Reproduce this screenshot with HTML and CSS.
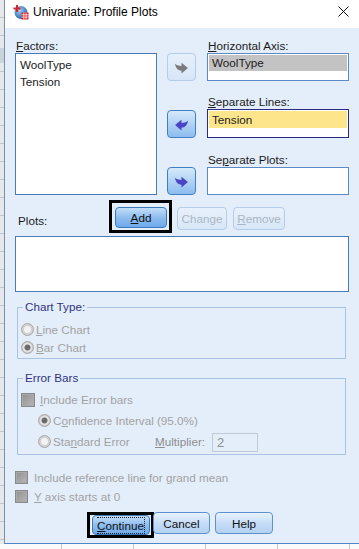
FILE: index.html
```html
<!DOCTYPE html>
<html lang="en">
<head>
    <meta charset="UTF-8">
    <title>Univariate: Profile Plots</title>
    <link rel="stylesheet" href="styles.css">
</head>
<body>
    <div class="screen">
        <div class="backdrop-left"></div>
        <div class="window">
            <!-- title bar -->
            <div class="titlebar">
                <svg class="app-icon" width="16" height="16" viewBox="0 0 16 16">
                    <defs>
                        <radialGradient id="globe" cx="0.4" cy="0.35" r="0.7">
                            <stop offset="0" stop-color="#9fd0f5"/>
                            <stop offset="1" stop-color="#1d5fa8"/>
                        </radialGradient>
                    </defs>
                    <circle cx="8" cy="8.5" r="6.5" fill="url(#globe)"/>
                    <path d="M3 1 h2 v2.5 h2.5 v2 h-2.5 v2.5 h-2 v-2.5 h-2.5 v-2 h2.5 z" fill="#d8232a"/>
                    <rect x="8.5" y="8.5" width="7" height="7" fill="#d8232a"/>
                    <path d="M8.5 10.8 h7 M8.5 13.1 h7 M10.8 8.5 v7 M13.1 8.5 v7" stroke="#fff" stroke-width="0.7"/>
                </svg>
                <span class="title">Univariate: Profile Plots</span>
                <svg class="close" width="11" height="11" viewBox="0 0 11 11">
                    <path d="M0.5 0.5 L10.5 10.5 M10.5 0.5 L0.5 10.5" stroke="#111" stroke-width="1"/>
                </svg>
            </div>

            <div class="dialog">
                <!-- variable selection -->
                <div class="top-grid">
                    <div class="label label-factors"><u>F</u>actors:</div>
                    <div class="listbox factors">
                        <div class="item">WoolType</div>
                        <div class="item">Tension</div>
                    </div>

                    <div class="label label-r1"><u>H</u>orizontal Axis:</div>
                    <button class="arrow-btn arrow-r1 disabled">
                        <svg width="15" height="13" viewBox="0 0 14 12"><path d="M7 1.5 L13 6.5 L7 11.5 L7 9 C4 9 1.5 7 1 2.5 C3 4.5 5 4.5 7 4.5 Z" fill="#7a7a7a"/></svg>
                    </button>
                    <div class="field field-r1">
                        <div class="sel sel-gray">WoolType</div>
                    </div>

                    <div class="label label-r2"><u>S</u>eparate Lines:</div>
                    <button class="arrow-btn arrow-r2">
                        <svg width="15" height="13" viewBox="0 0 14 12"><path d="M7 1.5 L1 6.5 L7 11.5 L7 9 C10 9 12.5 7 13 2.5 C11 4.5 9 4.5 7 4.5 Z" fill="#4b44c4"/></svg>
                    </button>
                    <div class="field field-r2 focused">
                        <div class="sel sel-yellow">Tension</div>
                    </div>

                    <div class="label label-r3">Se<u>p</u>arate Plots:</div>
                    <button class="arrow-btn arrow-r3">
                        <svg width="15" height="13" viewBox="0 0 14 12"><path d="M7 1.5 L13 6.5 L7 11.5 L7 9 C4 9 1.5 7 1 2.5 C3 4.5 5 4.5 7 4.5 Z" fill="#4b44c4"/></svg>
                    </button>
                    <div class="field field-r3"></div>
                </div>

                <!-- plots -->
                <div class="plots-row">
                    <span class="plots-label">Plots:</span>
                    <span class="focus-box">
                        <button class="btn btn-default add"><u>A</u>dd</button>
                    </span>
                    <button class="btn disabled change">Chan<u>g</u>e</button>
                    <button class="btn disabled remove"><u>R</u>emove</button>
                </div>
                <div class="listbox plots-list"></div>

                <!-- chart type -->
                <fieldset class="group chart-type">
                    <legend>Chart Type:</legend>
                    <div class="opt"><span class="radio"></span><span class="dim"><u>L</u>ine Chart</span></div>
                    <div class="opt"><span class="radio checked"></span><span class="dim"><u>B</u>ar Chart</span></div>
                </fieldset>

                <!-- error bars -->
                <fieldset class="group error-bars">
                    <legend>Error Bars</legend>
                    <div class="opt eb-row"><span class="check"></span><span class="dim"><u>I</u>nclude Error bars</span></div>
                    <div class="opt eb-row sub"><span class="radio checked"></span><span class="dim">C<u>o</u>nfidence Interval (95.0%)</span></div>
                    <div class="opt eb-row sub">
                        <span class="radio"></span><span class="dim se">Sta<u>n</u>dard Error</span>
                        <span class="mult-label"><u>M</u>ultiplier:</span>
                        <span class="mult-box">2</span>
                    </div>
                </fieldset>

                <div class="opt check-row"><span class="check"></span><span class="dim">Include reference line for <u>g</u>rand mean</span></div>
                <div class="opt check-row"><span class="check"></span><span class="dim"><u>Y</u> axis starts at 0</span></div>

                <!-- dialog buttons -->
                <div class="button-row">
                    <span class="focus-box focus-continue">
                        <button class="btn btn-default continue"><span class="dotted"><u>C</u>ontinue</span></button>
                    </span>
                    <button class="btn cancel">Cancel</button>
                    <button class="btn help">Help</button>
                </div>
            </div>
        </div>
    </div>
    <div class="backdrop-bottom"></div>
</body>
</html>
```

FILE: styles.css
```css
/* base */
:root {
    --dialog-bg: #e4eefa;
    --text: #1b1b1b;
    --dim-text: #a2a2a2;
    --legend: #2f3580;
    --group-border: #a9c4e2;
    --list-border: #4a7bb8;
}

* {
    margin: 0;
    padding: 0;
    box-sizing: border-box;
}

body {
    width: 359px;
    height: 549px;
    overflow: hidden;
    background: #eef0f2;
    font-family: "Liberation Sans", Arial, sans-serif;
    font-size: 11.7px;
    color: var(--text);
}

u {
    text-decoration: underline;
    text-underline-offset: 1px;
}

button {
    font: inherit;
}

/* desktop around the window */
.screen {
    display: flex;
    height: 544px;
}

.backdrop-left {
    width: 4px;
    background:
        linear-gradient(#c9d3de, #c9d3de) 0 48px / 100% 15px no-repeat,
        repeating-linear-gradient(#e6e8eb 0 17px, #bfc4ca 17px 18px);
}

.backdrop-bottom {
    height: 5px;
    background: repeating-linear-gradient(to right, #fafafa 0 61px, #c9c9c9 61px 62px, #fafafa 62px 72px);
}

.window {
    flex: 1;
    display: flex;
    flex-direction: column;
    border-left: 1px solid #7d8fa6;
    border-bottom: 1px solid #4d87c7;
    background: var(--dialog-bg);
}

/* title bar */
.titlebar {
    height: 28px;
    display: flex;
    align-items: flex-start;
    padding: 4px 0 0 8px;
    background: #ffffff;
}

.title {
    margin-left: 4px;
    line-height: 16px;
    font-size: 12px;
    color: #000;
}

.close {
    margin: 2px 10px 0 auto;
}

/* dialog body */
.dialog {
    flex: 1;
    padding: 10px 10px 0 10px;
}

.top-grid {
    display: grid;
    grid-template-columns: 152px 40px 142px;
    grid-template-rows: 15px 28px 28px 29px 29px 28px;
}

.label {
    align-self: end;
    line-height: 15px;
    padding-left: 1px;
}

.label-factors { grid-column: 1; grid-row: 1; }
.label-r1 { grid-column: 3; grid-row: 1; }
.label-r2 { grid-column: 3; grid-row: 3; }
.label-r3 { grid-column: 3; grid-row: 5; }

.listbox {
    background: #ffffff;
    border: 1px solid var(--list-border);
}

.factors {
    grid-column: 1;
    grid-row: 2 / 7;
    width: 142px;
    padding: 2px 4px;
}

.factors .item {
    line-height: 17px;
}

.field {
    grid-column: 3;
    background: #ffffff;
    border: 1px solid #5b8bc6;
    padding: 1px;
}

.field-r1 { grid-row: 2; }
.field-r2 { grid-row: 4; }
.field-r3 { grid-row: 6; }

.field.focused {
    border-color: #2b2a7c;
}

.sel {
    height: 16px;
    line-height: 16px;
    padding-left: 3px;
}

.sel-gray {
    background: #c3c3c3;
}

.sel-yellow {
    height: 17px;
    line-height: 17px;
    background: #fde58c;
}

/* transfer arrows */
.arrow-btn {
    grid-column: 2;
    width: 29px;
    height: 28px;
    border: 1px solid #3f80c4;
    border-radius: 4px;
    background: linear-gradient(#d6e9fb, #8dbcee);
    display: flex;
    align-items: center;
    justify-content: center;
}

.arrow-r1 { grid-row: 2; }
.arrow-r2 { grid-row: 4; margin-top: 1px; }
.arrow-r3 { grid-row: 6; }

.arrow-btn.disabled {
    border-color: #b4cce8;
    background: linear-gradient(#e6f0fb, #d7e6f7);
}

/* push buttons */
.btn {
    height: 22px;
    border: 1px solid #5b92cf;
    border-radius: 4px;
    background: linear-gradient(#e9f3fd, #c3dbf5 55%, #b4d2f2);
    color: #111;
    text-align: center;
}

.btn-default {
    border-color: #3b78b8;
    background: linear-gradient(#c4def8, #8fbdef 50%, #6ea9ea);
}

.btn.disabled {
    border-color: #b6cde9;
    background: linear-gradient(#e8f1fb, #d8e7f7);
    color: #aab6c4;
    height: 23px;
}

.focus-box {
    display: inline-flex;
    border: 3px solid #000;
    background: var(--dialog-bg);
}

.plots-row {
    display: flex;
    align-items: flex-start;
    height: 41px;
    padding-top: 5px;
}

.plots-label {
    width: 94px;
    padding-left: 3px;
    margin-top: 14px;
    line-height: 14px;
}

.plots-row .focus-box {
    padding: 4px 2px 2px 3px;
}

.add {
    width: 52px;
    height: 21px;
}

.change {
    width: 50px;
    margin: 7px 0 0 5px;
}

.remove {
    width: 52px;
    margin: 7px 0 0 6px;
}

.plots-list {
    height: 56px;
}

/* group boxes */
.group {
    margin: 8px 3px 0 2px;
    border: 1px solid var(--group-border);
    padding: 6px 5px 2px 4px;
}

.group legend {
    margin-left: 1px;
    padding: 0 2px;
    line-height: 14px;
    color: var(--legend);
}

.error-bars {
    margin-top: 12px;
    padding-top: 4px;
}

.opt {
    display: flex;
    align-items: center;
    height: 18px;
    gap: 2px;
}

.dim {
    color: var(--dim-text);
}

.radio {
    width: 13px;
    height: 13px;
    border-radius: 50%;
    border: 1px solid #a6a6a6;
    background: radial-gradient(circle, #f2f2f2 0 3px, #d2d2d2 4px);
    margin-left: -1px;
}

.radio.checked {
    background: radial-gradient(circle, #6c6c6c 0 2.5px, #e6e6e6 3.5px 4px, #cfcfcf 5px);
}

.check {
    width: 14px;
    height: 14px;
    border: 1px solid #8a8a8a;
    background: linear-gradient(135deg, #8f8f8f, #b9b9b9);
    box-shadow: inset 0 0 0 1px #a9a9a9;
    margin-right: 3px;
}

.eb-row {
    height: 21px;
}

.eb-row .check {
    margin-left: -1px;
}

.eb-row.sub {
    padding-left: 17px;
}

.se {
    width: 100px;
}

.mult-label {
    color: #8d8d8d;
    width: 55px;
}

.mult-box {
    width: 46px;
    height: 19px;
    border: 1px solid #c0c9d4;
    background: var(--dialog-bg);
    color: #8d8d8d;
    font-size: 13px;
    line-height: 17px;
    padding-left: 4px;
    margin-top: 2px;
}

.check-row {
    height: 19px;
}

.check-row .check {
    width: 13px;
    height: 13px;
    margin-right: 4px;
}

.error-bars + .check-row {
    margin-top: 13px;
}

/* bottom buttons */
.button-row {
    display: flex;
    align-items: flex-start;
    margin-top: 6px;
    padding-left: 72px;
}

.focus-continue {
    height: 26px;
    padding: 0 1px 0 2px;
}

.continue {
    width: 58px;
    height: 20px;
    box-shadow: -1px 0 0 #ffffff;
}

.continue .dotted {
    padding: 1px 0;
    border: 1px dotted #222;
    border-left: none;
}

.cancel {
    width: 57px;
    margin-left: -1px;
}

.help {
    width: 58px;
    margin-left: 5px;
}
```
